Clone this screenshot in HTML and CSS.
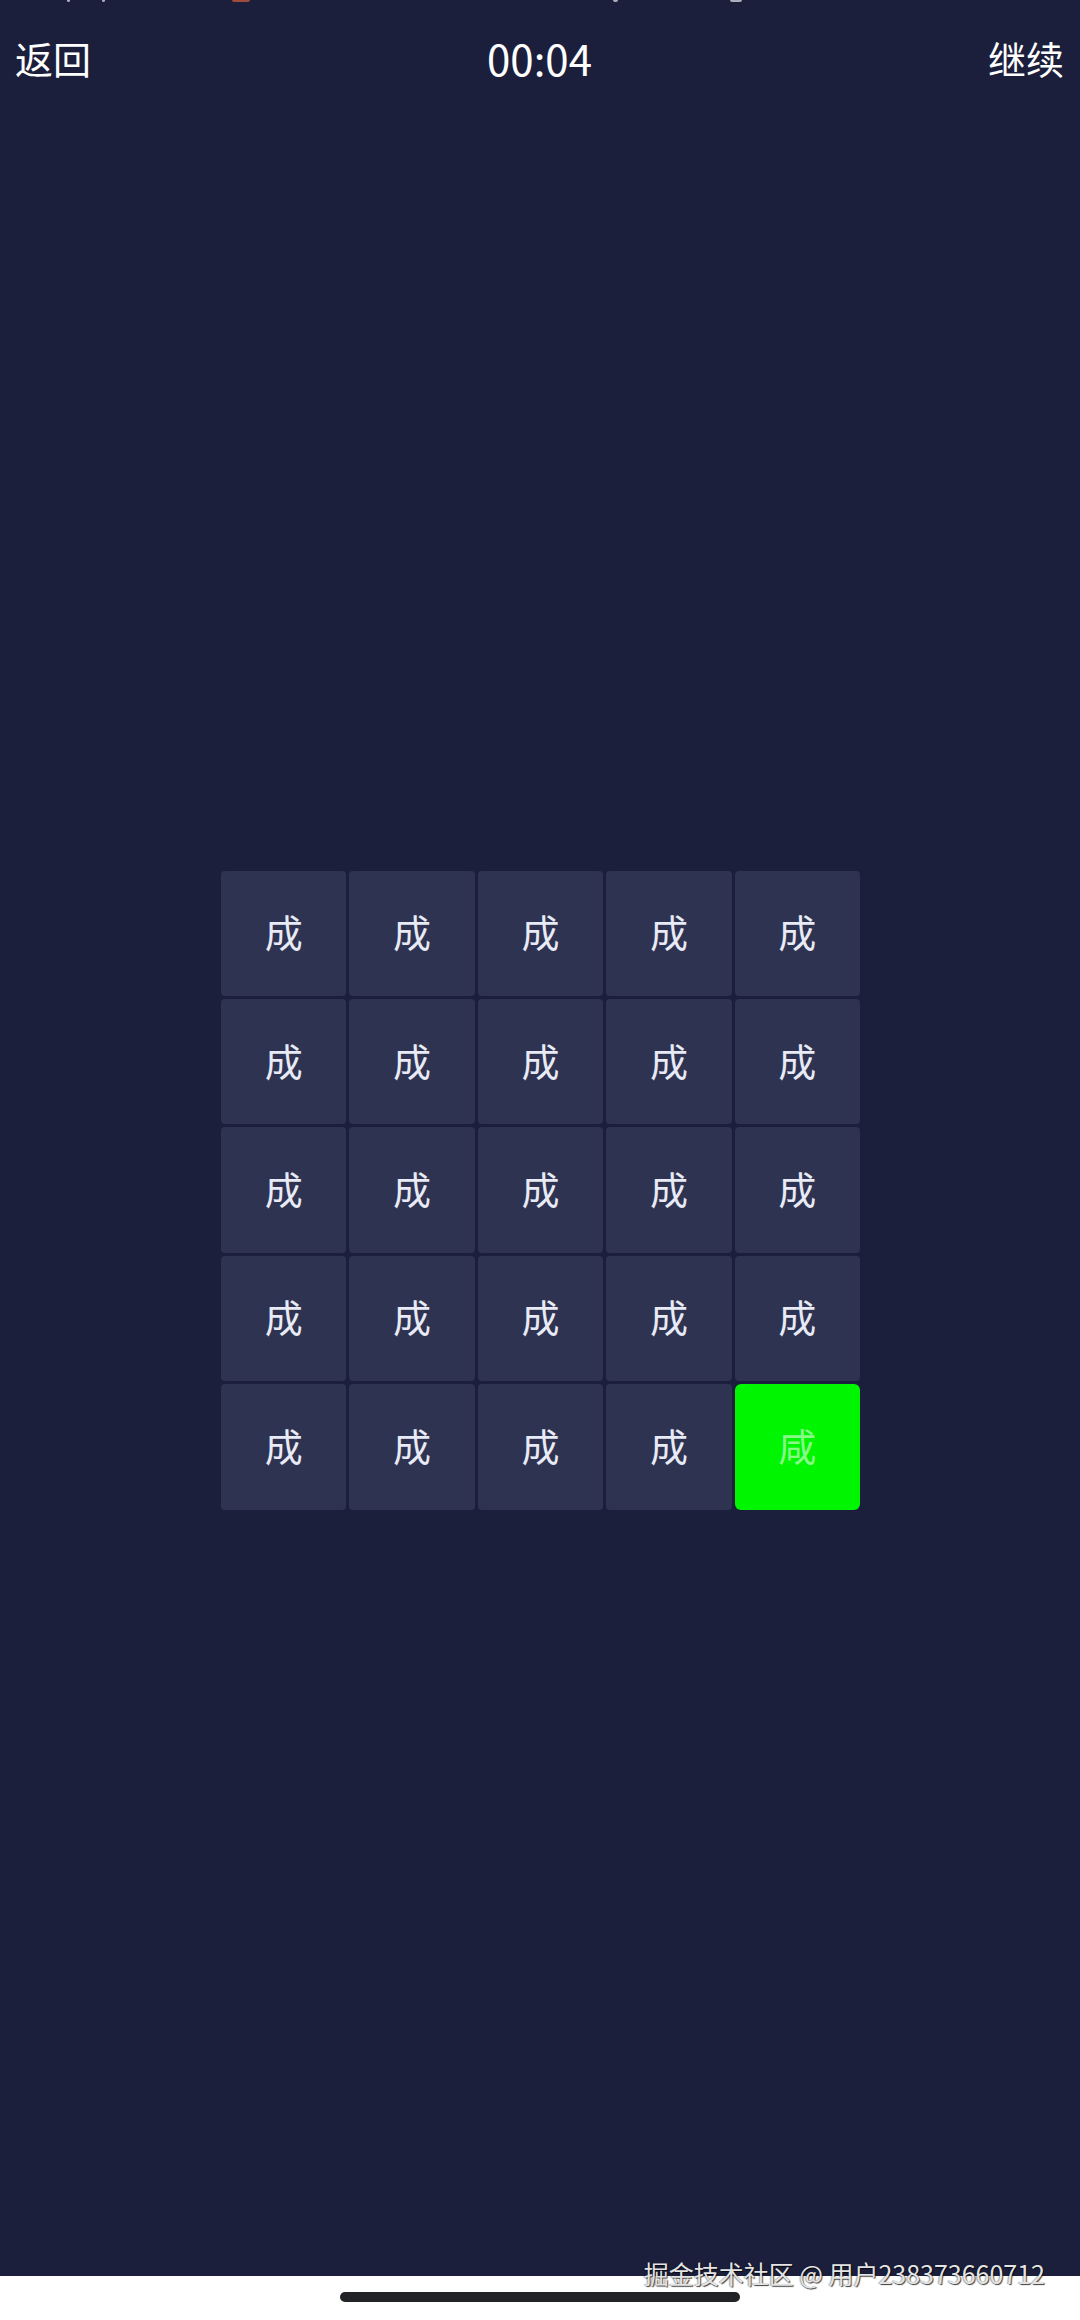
FILE: index.html
```html
<!DOCTYPE html>
<html lang="zh-CN">
<head>
<meta charset="utf-8">
<title>找不同</title>
<link rel="stylesheet" href="styles.css">
</head>
<body>
<div class="screen">
  <div class="status-bits">
    <span class="bit b1"></span>
    <span class="bit b2"></span>
    <span class="bit b3"></span>
    <span class="bit b4"></span>
    <span class="bit b5"></span>
  </div>
  <header class="topbar">
    <span class="nav left">返回</span>
    <span class="timer">00:04</span>
    <span class="nav right">继续</span>
  </header>
  <main class="stage">
    <div class="board">
      <div class="cell">成</div><div class="cell">成</div><div class="cell">成</div><div class="cell">成</div><div class="cell">成</div>
      <div class="cell">成</div><div class="cell">成</div><div class="cell">成</div><div class="cell">成</div><div class="cell">成</div>
      <div class="cell">成</div><div class="cell">成</div><div class="cell">成</div><div class="cell">成</div><div class="cell">成</div>
      <div class="cell">成</div><div class="cell">成</div><div class="cell">成</div><div class="cell">成</div><div class="cell">成</div>
      <div class="cell">成</div><div class="cell">成</div><div class="cell">成</div><div class="cell">成</div><div class="cell found">咸</div>
    </div>
  </main>
  <footer class="homebar">
    <span class="indicator"></span>
  </footer>
  <div class="watermark">掘金技术社区 @ 用户238373660712</div>
</div>
</body>
</html>
```

FILE: styles.css
```css
html, body {
  margin: 0;
  padding: 0;
}

body {
  background: #1b1f3c;
  font-family: "Noto Sans CJK SC", "Noto Sans", sans-serif;
}

.screen {
  position: relative;
  width: 1080px;
  height: 2320px;
  display: flex;
  flex-direction: column;
  background: #1b1f3c;
  overflow: hidden;
}

.status-bits {
  position: absolute;
  top: 0;
  left: 0;
  right: 0;
  height: 3px;
}

.bit {
  position: absolute;
  top: 0;
  height: 2px;
  background: rgba(232, 234, 242, 0.7);
  border-radius: 0 0 2px 2px;
}

.b1 { left: 67px; width: 3px; }
.b2 { left: 102px; width: 3px; }
.b3 { left: 232px; width: 18px; background: rgba(192, 88, 60, 0.8); }
.b4 { left: 613px; width: 5px; }
.b5 { left: 730px; width: 12px; }

.topbar {
  height: 120px;
  flex: 0 0 120px;
  padding: 0 16px 0 15px;
  display: grid;
  grid-template-columns: 1fr auto 1fr;
  align-items: center;
  color: #ffffff;
}

.nav {
  font-size: 38px;
  line-height: 1;
  padding-bottom: 4px;
}

.nav.right {
  justify-self: end;
}

.timer {
  font-size: 42px;
  line-height: 1;
  padding-bottom: 4px;
}

.stage {
  flex: 1 1 auto;
  display: flex;
  align-items: center;
  justify-content: center;
  padding-bottom: 16px;
}

.board {
  width: 639px;
  height: 639px;
  display: grid;
  grid-template-columns: repeat(5, 1fr);
  grid-template-rows: repeat(5, 1fr);
  gap: 3px;
  margin-left: 1px;
}

.cell {
  background: #2e3352;
  border-radius: 4px;
  display: flex;
  align-items: center;
  justify-content: center;
  color: #e8eaf5;
  font-size: 38px;
  line-height: 1;
  padding-bottom: 4px;
  box-sizing: border-box;
}

.cell.found {
  background: #00f500;
  border-radius: 6px;
  color: rgba(255, 255, 255, 0.55);
}

.homebar {
  flex: 0 0 44px;
  height: 44px;
  background: #ffffff;
  display: flex;
  justify-content: center;
  padding-top: 16px;
  box-sizing: border-box;
}

.indicator {
  width: 400px;
  height: 10px;
  border-radius: 5px;
  background: #222326;
}

.watermark {
  position: absolute;
  right: 35px;
  bottom: 34px;
  font-size: 25px;
  line-height: 1;
  color: #e4e4e4;
  text-shadow: 1px 1px 1px rgba(0, 0, 0, 0.75), -1px 0 1px rgba(0, 0, 0, 0.35);
  white-space: nowrap;
}
```
